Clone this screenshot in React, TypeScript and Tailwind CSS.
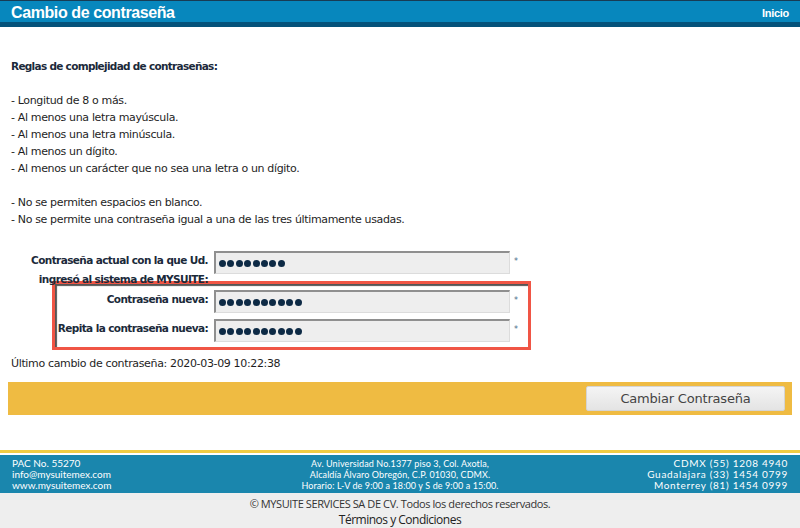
import React from "react";

const body = { fontFamily: '"DejaVu Sans", Verdana, sans-serif' };

function Dots({ n }: { n: number }) {
  return (
    <div className="flex gap-[1.4px]">
      {Array.from({ length: n }).map((_, i) => (
        <span key={i} className="block w-[7px] h-[7px] rounded-full bg-[#0d2a45]" />
      ))}
    </div>
  );
}

function Field({ label, dots }: { label: React.ReactNode; dots: number }) {
  return (
    <div className="flex items-start">
      <div className="w-[208px] shrink-0 text-right font-bold text-[10.5px] leading-[19px] text-[#1b2a3a] tracking-[-0.6px]">
        {label}
      </div>
      <div className="ml-[6px] w-[296px] h-[23px] bg-[#eeeeee] border-t-2 border-l-2 border-[#8f8f8f] border-r border-b border-r-[#dcdcdc] border-b-[#dcdcdc] flex items-center pl-[3px]">
        <Dots n={dots} />
      </div>
      <div className="ml-[4px] mt-[5px] text-[8px] text-[#4a6a8a]">*</div>
    </div>
  );
}

export default function App() {
  return (
    <div className="w-[800px] h-[528px] bg-white flex flex-col overflow-hidden" style={body}>
      {/* header */}
      <div className="h-[27px] bg-[#0787bd] border-t border-[#183c54] flex items-center justify-between px-[11px] shadow-[inset_0_-5px_0_#04527a]">
        <span className="text-white font-bold text-[16px] leading-none -mt-[2px] tracking-[-0.4px]" style={{ fontFamily: '"Liberation Sans", Arial, sans-serif' }}>
          Cambio de contraseña
        </span>
        <span className="text-white font-bold text-[11px] leading-none -mt-[2px] tracking-[-0.3px]" style={{ fontFamily: '"Liberation Sans", Arial, sans-serif' }}>
          Inicio
        </span>
      </div>

      <div className="px-[11px] pt-[31px] text-[11px] leading-[17px] text-[#1e1e1e] tracking-[-0.35px]">
        <div className="font-bold text-[10.5px] tracking-[-0.7px] text-[#1b2a3a]">Reglas de complejidad de contraseñas:</div>
        <div className="h-[17px]" />
        <div>- Longitud de 8 o más.</div>
        <div>- Al menos una letra mayúscula.</div>
        <div>- Al menos una letra minúscula.</div>
        <div>- Al menos un dígito.</div>
        <div>- Al menos un carácter que no sea una letra o un dígito.</div>
        <div className="h-[17px]" />
        <div>- No se permiten espacios en blanco.</div>
        <div>- No se permite una contraseña igual a una de las tres últimamente usadas.</div>
      </div>

      <div className="pt-[23px]">
        <Field
          dots={8}
          label={
            <>
              Contraseña actual con la que Ud.
              <br />
              ingresó al sistema de MYSUITE:
            </>
          }
        />
        <div className="ml-[52px] mt-[-8px] w-[479px] border-[3px] border-[#f05545] shadow-[inset_2px_2px_1px_#555] pt-[6px] pb-[5px]">
          <div className="-ml-[55px] flex flex-col gap-[6px]">
            <Field dots={10} label="Contraseña nueva:" />
            <Field dots={10} label="Repita la contraseña nueva:" />
          </div>
        </div>
      </div>

      <div className="px-[11px] pt-[5px] text-[11px] leading-[17px] text-[#1e1e1e] tracking-[-0.35px]">
        Último cambio de contraseña: 2020-03-09 10:22:38
      </div>

      <div className="mx-[8px] mt-[10px] h-[33px] bg-[#efbb42] flex items-center justify-end pr-[7px]">
        <button className="w-[199px] h-[25px] bg-gradient-to-b from-[#f4f4f4] to-[#e4e4e4] border border-[#d4d4d4] rounded-[2px] text-[13px] text-[#444] tracking-[-0.2px]" style={body}>
          Cambiar Contraseña
        </button>
      </div>

      <div className="flex-1" />

      {/* footer */}
      <div className="h-[3px] bg-[#f0cc45]" />
      <div className="h-[2px] bg-white" />
      <div className="h-[38px] bg-[#1a86ad] flex justify-between px-[12px] pt-[3px] text-white leading-[11px]" style={{ fontFamily: '"Lato", "DejaVu Sans", sans-serif' }}>
        <div className="w-[200px] text-[10px]">
          <div>PAC No. 55270</div>
          <div>info@mysuitemex.com</div>
          <div>www.mysuitemex.com</div>
        </div>
        <div className="text-center text-[9px] tracking-[0.1px]">
          <div>Av. Universidad No.1377 piso 3, Col. Axotla,</div>
          <div>Alcaldía Álvaro Obregón, C.P. 01030, CDMX.</div>
          <div>Horario: L-V de 9:00 a 18:00 y S de 9:00 a 15:00.</div>
        </div>
        <div className="w-[200px] text-right text-[10px] tracking-[0.7px]">
          <div>CDMX (55) 1208 4940</div>
          <div>Guadalajara (33) 1454 0799</div>
          <div>Monterrey (81) 1454 0999</div>
        </div>
      </div>
      <div className="h-[35px] bg-[#eeeeee] flex flex-col items-center pt-[3px] text-[#333] leading-[16px]" style={{ fontFamily: '"Open Sans", "Liberation Sans", sans-serif' }}>
        <div className="text-[11px] tracking-[-0.4px]">© MYSUITE SERVICES SA DE CV. Todos los derechos reservados.</div>
        <div className="text-[12px] text-[#222] tracking-[-0.5px]">Términos y Condiciones</div>
      </div>
    </div>
  );
}
